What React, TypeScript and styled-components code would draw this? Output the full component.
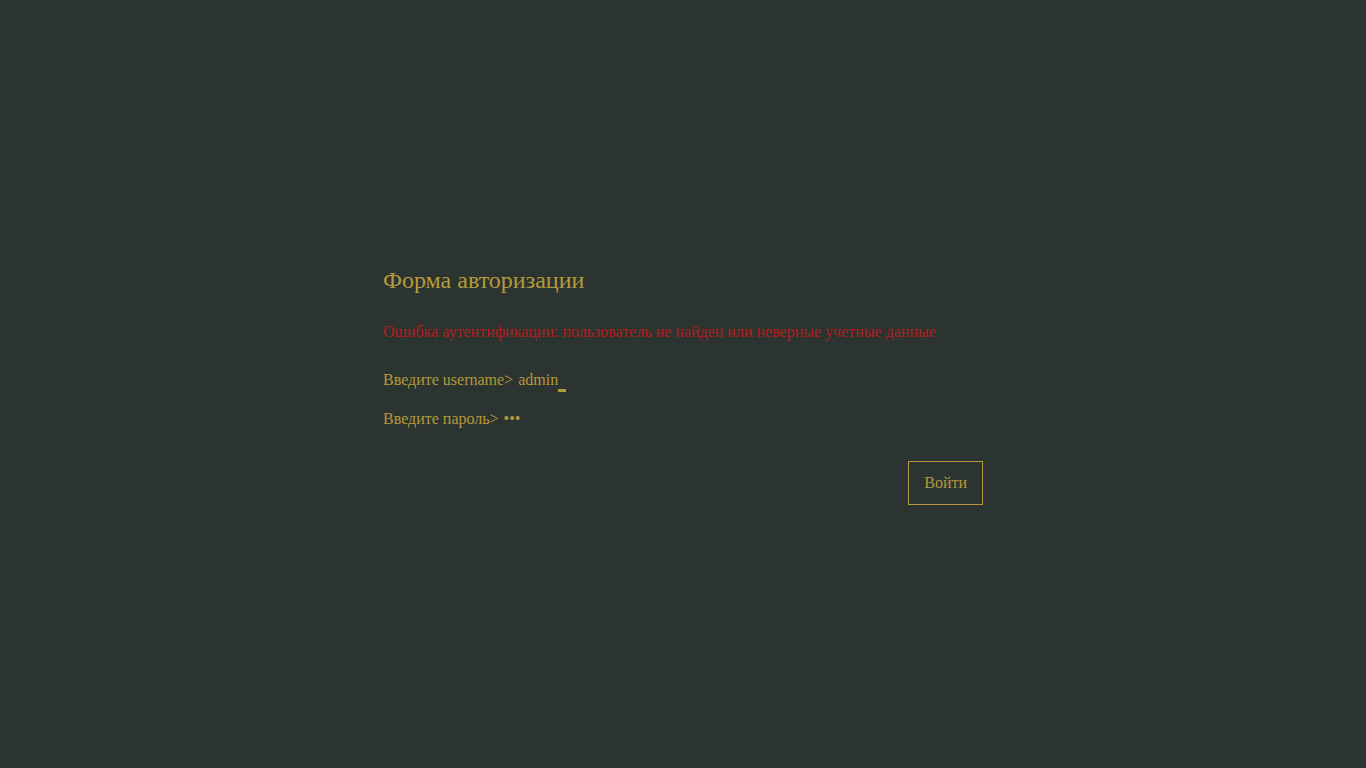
import React from "react";
import styled, { createGlobalStyle } from "styled-components";

const Global = createGlobalStyle`
  html, body { margin: 0; padding: 0; background: #2c3431; }
  body { font-family: "Liberation Serif", "Times New Roman", serif; }
`;

const Page = styled.div`
  min-height: 100vh;
  display: flex;
  align-items: center;
  justify-content: center;
  background: #2c3431;
  color: #b5993a;
`;

const Form = styled.form`
  width: 600px;
  display: flex;
  flex-direction: column;
`;

const Title = styled.h2`
  margin: 0 0 26px;
  font-size: 24px;
  font-weight: normal;
  line-height: 34px;
`;

const ErrorText = styled.div`
  color: #b31c1c;
  font-size: 16px;
  line-height: 18px;
  margin-bottom: 30px;
`;

const Line = styled.div<{ $gap?: number }>`
  font-size: 16px;
  line-height: 18px;
  height: 18px;
  margin-bottom: ${(p) => p.$gap ?? 0}px;
  white-space: pre;
`;

const Value = styled.span`
  margin-left: 5px;
`;

const Cursor = styled.span`
  display: inline-block;
  width: 8px;
  height: 3px;
  background: #b5993a;
  vertical-align: -7px;
`;

const Actions = styled.div`
  display: flex;
  justify-content: flex-end;
  margin-top: 33px;
`;

const Button = styled.button`
  font-family: "Liberation Serif", "Times New Roman", serif;
  font-size: 16px;
  line-height: 18px;
  color: #b5993a;
  background: transparent;
  border: 1px solid #b5993a;
  padding: 12px 15px;
  cursor: pointer;
`;

export default function App() {
  return (
    <>
      <Global />
      <Page>
        <Form onSubmit={(e) => e.preventDefault()}>
          <Title>Форма авторизации</Title>
          <ErrorText>
            Ошибка аутентификации: пользователь не найден или неверные учетные данные
          </ErrorText>
          <Line $gap={21}>
            Введите username&gt;<Value>admin</Value>
            <Cursor />
          </Line>
          <Line>
            Введите пароль&gt;<Value>•••</Value>
          </Line>
          <Actions>
            <Button type="submit">Войти</Button>
          </Actions>
        </Form>
      </Page>
    </>
  );
}
